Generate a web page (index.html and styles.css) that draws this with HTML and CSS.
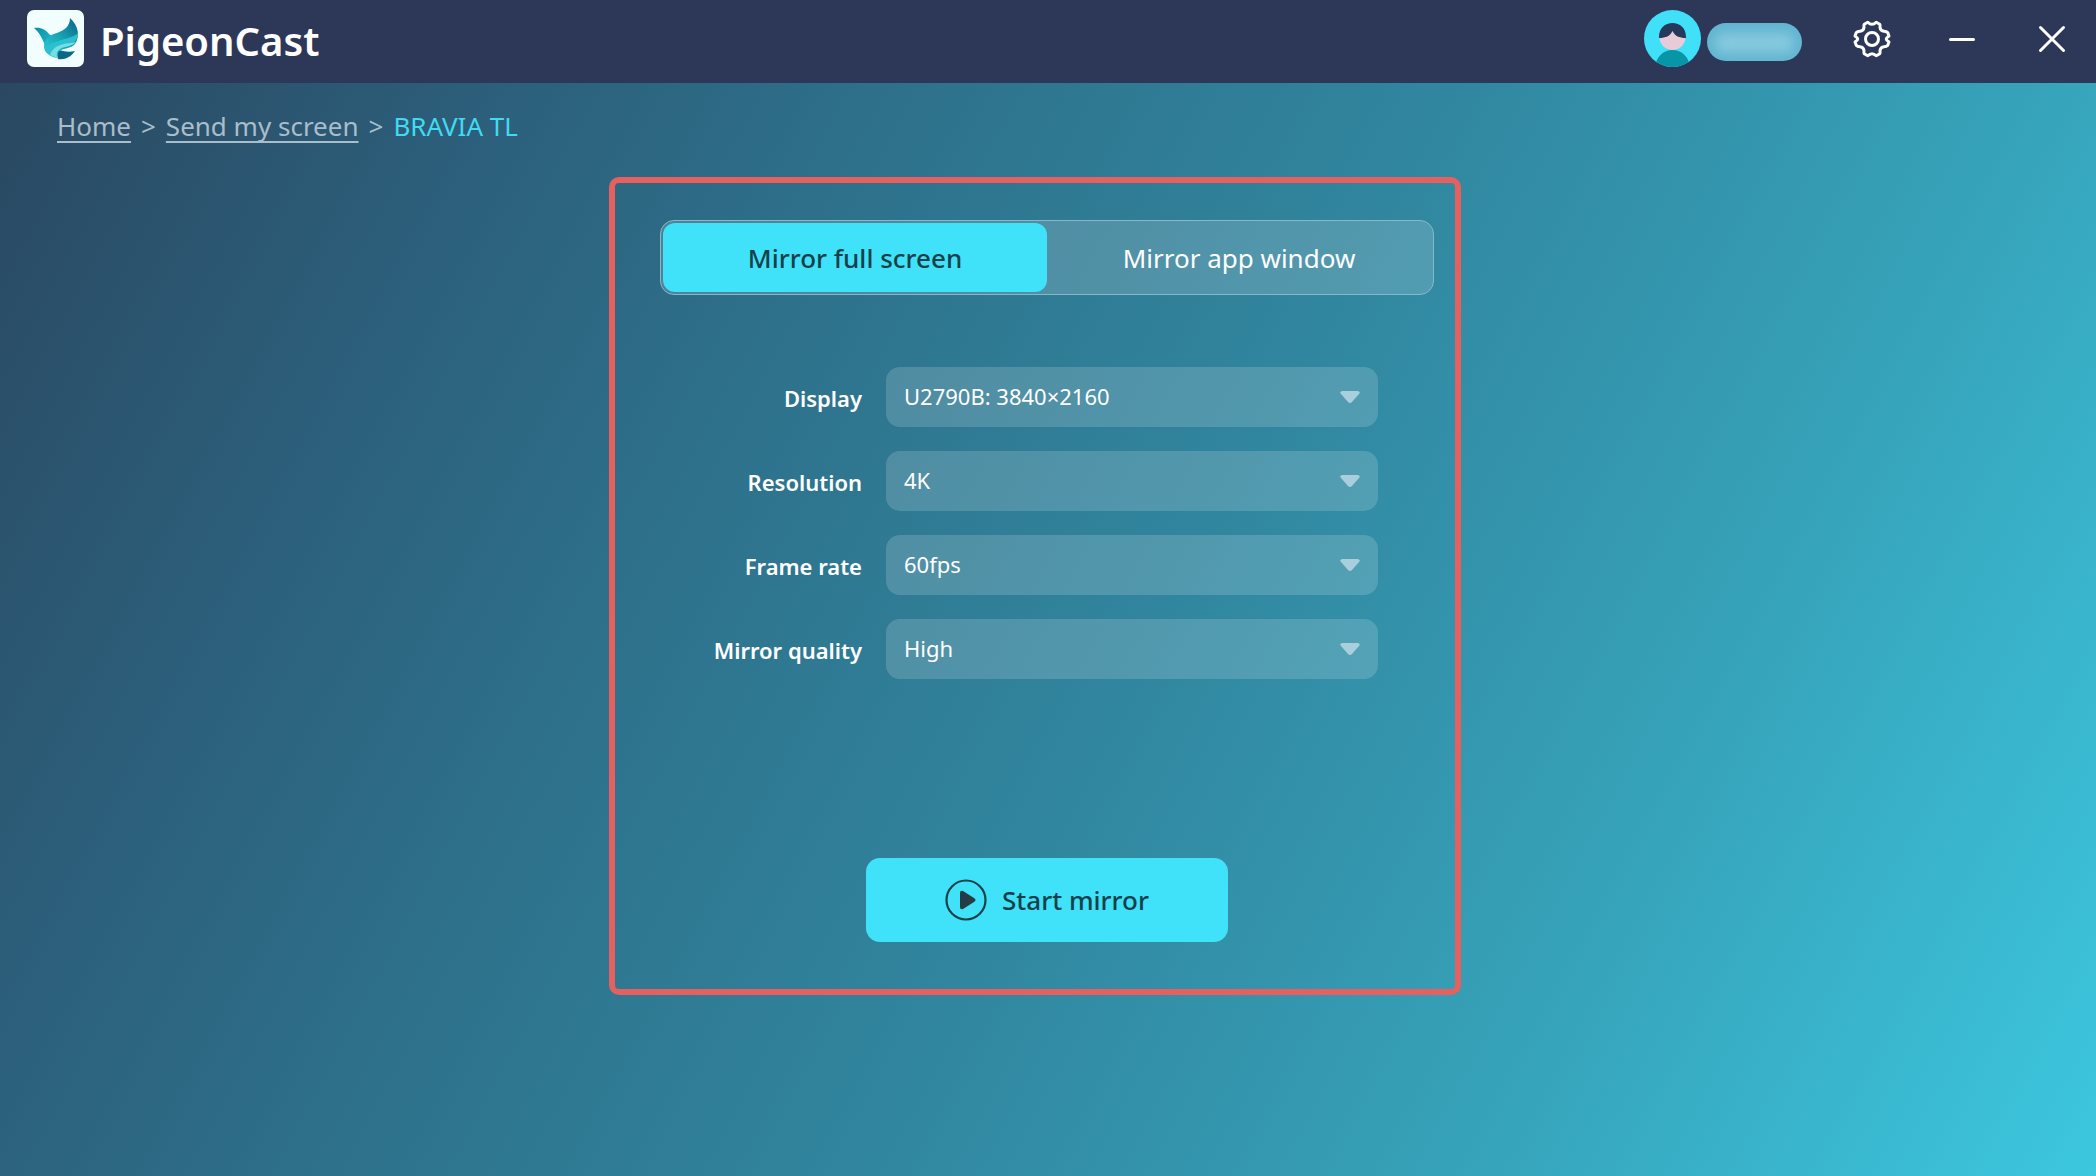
FILE: index.html
```html
<!DOCTYPE html>
<html lang="en">
<head>
<meta charset="utf-8">
<title>PigeonCast</title>
<meta name="viewport" content="width=device-width, initial-scale=1">
<link rel="stylesheet" href="styles.css">
</head>
<body>
<header class="titlebar">
  <div class="brand">
    <svg class="brand-logo" viewBox="0 0 57 57" aria-hidden="true">
      <defs>
        <linearGradient id="wing" x1="0" y1="1" x2="1" y2="0"><stop offset="0" stop-color="#2ad0d8"/><stop offset=".5" stop-color="#18a5b5"/><stop offset="1" stop-color="#0a6288"/></linearGradient>
        <linearGradient id="left" x1="0" y1="0" x2="1" y2="1"><stop offset="0" stop-color="#0b8fa0"/><stop offset="1" stop-color="#20c4d0"/></linearGradient>
      </defs>
      <rect width="57" height="57" rx="7" fill="#f2fdfd"/>
      <path d="M7 18c7-1 12 2 15 6l4 3-1 17c-8-5-8-18-18-26z" fill="url(#left)"/>
      <path d="M43 8c9 8 10 19 5 26-4 5-12 4-15 7-3 2-3 5-3 7-7-1-13-6-13-11 0-9 6-12 13-14 8-3 13-7 13-15z" fill="url(#wing)"/>
      <path d="M51 23c-7 7-24 6-33 15 0 3 3 6 6 7 3-9 11-10 18-11 6-1 9-5 9-11z" fill="#2dbfce"/>
      <path d="M49 32c-9 2-22 1-26 13l7 3c-1-4 0-7 3-9 5-3 12-2 16-7z" fill="#72dfe2"/>
      <path d="M31 49c-2-6 1-10 5-8 4 1 8 1 12 0-4 6-10 9-17 8z" fill="#086a86"/>
    </svg>
    <h1 class="brand-name">PigeonCast</h1>
  </div>
  <div class="window-tools">
    <div class="account">
      <svg class="avatar" viewBox="0 0 57 57" role="img" aria-label="Account">
        <defs><clipPath id="round"><circle cx="28.5" cy="28.5" r="28.5"/></clipPath></defs>
        <g clip-path="url(#round)">
          <rect width="57" height="57" fill="#3fe0f8"/>
          <circle cx="28.500" cy="57" r="17" fill="#0795a8"/>
          <circle cx="28.500" cy="27" r="13" fill="#e7ccd7"/>
          <path d="M15 28C14 8 43 8 42 28c-7 0-11-2-13.500-7C26 26 22 28 15 28z" fill="#27395b"/>
        </g>
      </svg>
      <span class="account-name"><span class="account-haze"></span></span>
    </div>
    <button class="tool" type="button" aria-label="Settings">
      <svg class="tool-icon" viewBox="0 0 40 40" fill="none" stroke="#fff" stroke-width="3" stroke-linejoin="round" aria-hidden="true">
        <path d="M12.300 5.200L15.800 3.200Q20 7.500 24.200 3.200L27.700 5.200Q28.300 6 28 8.500Q28.500 12 32 12.200Q34.600 12.300 35.600 13.400L37 17L36.500 17.500Q32 20 36.500 22.500L37 23L35.600 26.600Q34.600 27.700 32 27.800Q28.500 28 28 31.500Q28.300 34 27.700 34.800L24.200 36.800Q20 32.500 15.800 36.800L12.300 34.800Q11.700 34 12 31.500Q11.500 28 8 27.800Q5.400 27.700 4.400 26.600L3 23L3.500 22.500Q8 20 3.500 17.500L3 17L4.400 13.400Q5.400 12.300 8 12.200Q11.500 12 12 8.500Q11.700 6 12.300 5.200Z"/>
        <circle cx="20" cy="20" r="6.500"/>
      </svg>
    </button>
    <button class="tool" type="button" aria-label="Minimize">
      <svg class="tool-icon" viewBox="0 0 40 40" stroke="#fff" stroke-width="3" stroke-linecap="round" aria-hidden="true"><path d="M8.500 20.500h23"/></svg>
    </button>
    <button class="tool" type="button" aria-label="Close">
      <svg class="tool-icon" viewBox="0 0 40 40" stroke="#fff" stroke-width="3" stroke-linecap="round" aria-hidden="true"><path d="M8.500 8.500l23 23M31.500 8.500l-23 23"/></svg>
    </button>
  </div>
</header>

<nav class="breadcrumb" aria-label="Breadcrumb">
  <a class="crumb" href="#home">Home</a>
  <span>&gt;</span>
  <a class="crumb" href="#send">Send my screen</a>
  <span>&gt;</span>
  <span class="crumb-current" aria-current="page">BRAVIA TL</span>
</nav>

<main class="content">
  <form class="panel">
    <div class="tabs" role="tablist">
      <button class="tab tab-active" type="button" role="tab" aria-selected="true">Mirror full screen</button>
      <button class="tab" type="button" role="tab" aria-selected="false">Mirror app window</button>
    </div>
    <div class="fields">
      <label class="label" for="display">Display</label>
      <span class="field"><select class="select" id="display"><option>U2790B: 3840×2160</option></select><svg class="arrow" viewBox="0 0 20 12" aria-hidden="true"><path d="M2 0h16q3 1 1 3l-7 8q-2 2-4 0L1 3Q-1 1 2 0z"/></svg></span>
      <label class="label" for="resolution">Resolution</label>
      <span class="field"><select class="select" id="resolution"><option>4K</option></select><svg class="arrow" viewBox="0 0 20 12" aria-hidden="true"><path d="M2 0h16q3 1 1 3l-7 8q-2 2-4 0L1 3Q-1 1 2 0z"/></svg></span>
      <label class="label" for="rate">Frame rate</label>
      <span class="field"><select class="select" id="rate"><option>60fps</option></select><svg class="arrow" viewBox="0 0 20 12" aria-hidden="true"><path d="M2 0h16q3 1 1 3l-7 8q-2 2-4 0L1 3Q-1 1 2 0z"/></svg></span>
      <label class="label" for="quality">Mirror quality</label>
      <span class="field"><select class="select" id="quality"><option>High</option></select><svg class="arrow" viewBox="0 0 20 12" aria-hidden="true"><path d="M2 0h16q3 1 1 3l-7 8q-2 2-4 0L1 3Q-1 1 2 0z"/></svg></span>
    </div>
    <button class="start" type="button">
      <svg class="start-icon" viewBox="0 0 42 42" aria-hidden="true"><circle cx="21" cy="21" r="19.500" fill="none" stroke="#17404a" stroke-width="2.200"/><path d="M15 14q0-3 3-2l11 7q3 2 0 4l-11 7q-3 1-3-2z" fill="#263c44"/></svg>
      Start mirror
    </button>
  </form>
</main>
</body>
</html>
```

FILE: styles.css
```css
* {
  box-sizing: border-box;
}

body {
  margin: 0;
  min-height: 100vh;
  display: flex;
  flex-direction: column;
  font-family: "Noto Sans", "Open Sans", sans-serif;
  color: #fff;
  background: linear-gradient(118deg, #2a465f 0%, #2c5f7b 20%, #2e718b 35%, #31869f 55%, #36a2b9 76%, #3cc7df 100%);
}

button,
select {
  font-family: inherit;
  color: inherit;
  border: 0;
  margin: 0;
}

.titlebar {
  height: 83px;
  padding: 0 24px 6px 27px;
  display: flex;
  align-items: center;
  justify-content: space-between;
  background: #2d3859;
}

.brand {
  display: flex;
  align-items: center;
  gap: 16px;
}

.brand-logo,
.avatar {
  width: 57px;
  height: 57px;
  display: block;
}

.brand-name {
  margin: 0;
  padding-top: 4px;
  font-size: 40px;
  line-height: 56px;
  font-weight: 600;
}

.window-tools {
  display: flex;
  align-items: center;
  gap: 50px;
}

.account {
  display: flex;
  align-items: center;
  gap: 6px;
}

.account-name {
  width: 95px;
  height: 38px;
  margin-top: 7px;
  padding: 10px 8px;
  border-radius: 19px;
  background: #61b5d0;
  overflow: hidden;
}

.account-haze {
  display: block;
  height: 20px;
  border-radius: 8px;
  background: #86c9de;
  filter: blur(6px);
}

.tool {
  width: 40px;
  height: 40px;
  padding: 0;
  background: none;
}

.tool-icon {
  width: 40px;
  height: 40px;
  display: block;
}

.breadcrumb {
  padding: 24px 57px 0;
  display: flex;
  gap: 10px;
  font-size: 26px;
  line-height: 38px;
  color: #a9bdca;
}

.crumb {
  color: inherit;
  text-decoration: underline;
  text-decoration-thickness: 2px;
  text-underline-offset: 5px;
  text-decoration-skip-ink: none;
}

.crumb-current {
  color: #42daf2;
}

.content {
  padding: 32px 26px 32px 0;
  display: flex;
  justify-content: center;
}

.panel {
  width: 852px;
  padding: 37px 21px 47px 45px;
  border: 6px solid #e5605f;
  border-radius: 10px;
  display: flex;
  flex-direction: column;
  align-items: center;
}

.tabs {
  align-self: stretch;
  height: 75px;
  padding: 2px;
  display: flex;
  border: 1px solid #86b9c7;
  border-radius: 14px;
  background: rgba(255, 255, 255, 0.16);
}

.tab {
  flex: 1;
  padding: 0;
  border-radius: 12px;
  background: none;
  font-size: 26px;
  line-height: 36px;
}

.tab-active {
  background: #3fe2f9;
  color: #17404a;
  font-weight: 500;
}

.fields {
  margin-top: 72px;
  display: grid;
  grid-template-columns: 202px 492px;
  grid-auto-rows: 60px;
  column-gap: 24px;
  row-gap: 24px;
  align-self: flex-start;
}

.label {
  text-align: right;
  font-size: 22px;
  line-height: 62px;
  font-weight: 600;
}

.field {
  display: grid;
  align-items: center;
}

.select {
  grid-area: 1 / 1;
  height: 60px;
  padding: 0 18px 2px;
  appearance: none;
  border-radius: 14px;
  background: rgba(255, 255, 255, 0.16);
  font-size: 22px;
}

.arrow {
  grid-area: 1 / 1;
  justify-self: end;
  width: 20px;
  height: 12px;
  margin-right: 18px;
  fill: #a8cfdb;
  pointer-events: none;
}

.start {
  width: 362px;
  height: 84px;
  margin-top: 179px;
  padding: 0;
  display: flex;
  align-items: center;
  justify-content: center;
  gap: 15px;
  border-radius: 14px;
  background: #3fe2f9;
  color: #17404a;
  font-size: 26px;
  font-weight: 500;
}

.start-icon {
  width: 42px;
  height: 42px;
}
```
